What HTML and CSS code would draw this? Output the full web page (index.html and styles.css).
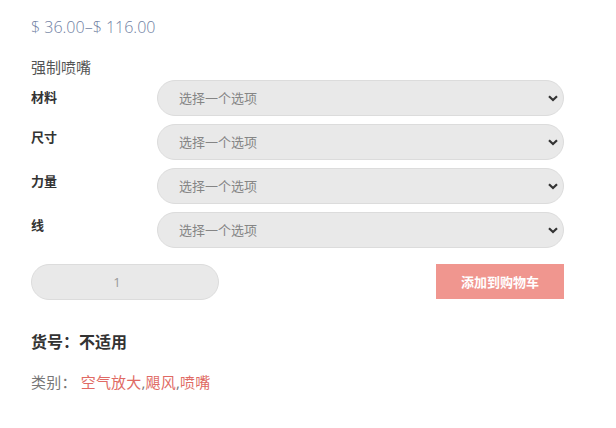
FILE: index.html
```html
<!DOCTYPE html>
<html lang="zh">
<head>
<meta charset="utf-8">
<link rel="stylesheet" href="styles.css">
</head>
<body>
<div class="product">
  <p class="price">$ 36.00–$ 116.00</p>
  <p class="subtitle">强制喷嘴</p>
  <div class="variations">
    <div class="row first">
      <div class="label">材料</div>
      <div class="select-wrap">
        <select class="select"><option>选择一个选项</option></select>
        <svg class="chev" width="10" height="7" viewBox="0 0 10 7"><path d="M1 1.2 L5 5 L9 1.2" fill="none" stroke="#333" stroke-width="2.2"/></svg>
      </div>
    </div>
    <div class="row">
      <div class="label">尺寸</div>
      <div class="select-wrap">
        <select class="select"><option>选择一个选项</option></select>
        <svg class="chev" width="10" height="7" viewBox="0 0 10 7"><path d="M1 1.2 L5 5 L9 1.2" fill="none" stroke="#333" stroke-width="2.2"/></svg>
      </div>
    </div>
    <div class="row">
      <div class="label">力量</div>
      <div class="select-wrap">
        <select class="select"><option>选择一个选项</option></select>
        <svg class="chev" width="10" height="7" viewBox="0 0 10 7"><path d="M1 1.2 L5 5 L9 1.2" fill="none" stroke="#333" stroke-width="2.2"/></svg>
      </div>
    </div>
    <div class="row">
      <div class="label">线</div>
      <div class="select-wrap">
        <select class="select"><option>选择一个选项</option></select>
        <svg class="chev" width="10" height="7" viewBox="0 0 10 7"><path d="M1 1.2 L5 5 L9 1.2" fill="none" stroke="#333" stroke-width="2.2"/></svg>
      </div>
    </div>
  </div>
  <div class="cart">
    <input class="qty" type="text" value="1">
    <button class="add">添加到购物车</button>
  </div>
  <p class="sku">货号：不适用</p>
  <p class="cats">类别： <a href="#">空气放大</a>,<a href="#">飓风</a>,<a href="#">喷嘴</a></p>
</div>
</body>
</html>
```

FILE: styles.css
```css
* { box-sizing: border-box; }
body {
  margin: 0;
  background: #fff;
  font-family: "Open Sans", "Noto Sans CJK SC", sans-serif;
  color: #555;
}
.product {
  width: 564px;
  padding: 16px 0 0 31px;
}
.price {
  margin: 0;
  font-size: 16px;
  line-height: 22px;
  font-weight: 300;
  color: #6f80a2;
  letter-spacing: 0;
}
.subtitle {
  margin: 18px 0 0;
  font-size: 15px;
  line-height: 22px;
  color: #555;
}
.variations {
  margin-top: 2px;
  display: flex;
  flex-direction: column;
  gap: 8px;
}
.row {
  display: flex;
  align-items: flex-start;
}
.label {
  width: 126px;
  font-size: 13px;
  font-weight: 700;
  color: #333;
  line-height: 18px;
  padding-top: 4px;
}
.row.first .label { padding-top: 8px; }
.select-wrap {
  position: relative;
  flex: 1;
}
.select {
  appearance: none;
  -webkit-appearance: none;
  display: block;
  width: 100%;
  height: 36px;
  border: 1px solid #dcdcdc;
  border-radius: 18px;
  background: #e9e9e9;
  color: #858585;
  font-family: "Open Sans", "Noto Sans CJK SC", sans-serif;
  font-size: 13px;
  padding: 0 0 0 21px;
  outline: none;
}
.chev {
  position: absolute;
  right: 6px;
  top: 15px;
  pointer-events: none;
}
.cart {
  margin-top: 16px;
  display: flex;
  justify-content: space-between;
}
.qty {
  width: 188px;
  height: 36px;
  border: 1px solid #dcdcdc;
  border-radius: 18px;
  background: #e9e9e9;
  color: #999;
  text-align: center;
  font-family: "Open Sans", sans-serif;
  font-size: 13px;
  padding: 0 16px 0 0;
  outline: none;
}
.add {
  width: 128px;
  height: 35px;
  border: 0;
  background: #f0968f;
  color: #fff;
  font-family: "Open Sans", "Noto Sans CJK SC", sans-serif;
  font-size: 13px;
  font-weight: 700;
  cursor: pointer;
}
.sku {
  margin: 31px 0 0;
  font-size: 16px;
  line-height: 22px;
  font-weight: 700;
  color: #333;
}
.cats {
  margin: 18px 0 0;
  font-size: 15px;
  line-height: 22px;
  color: #777;
  letter-spacing: 0.2px;
}
.cats a {
  color: #e06a64;
  text-decoration: none;
}
```
